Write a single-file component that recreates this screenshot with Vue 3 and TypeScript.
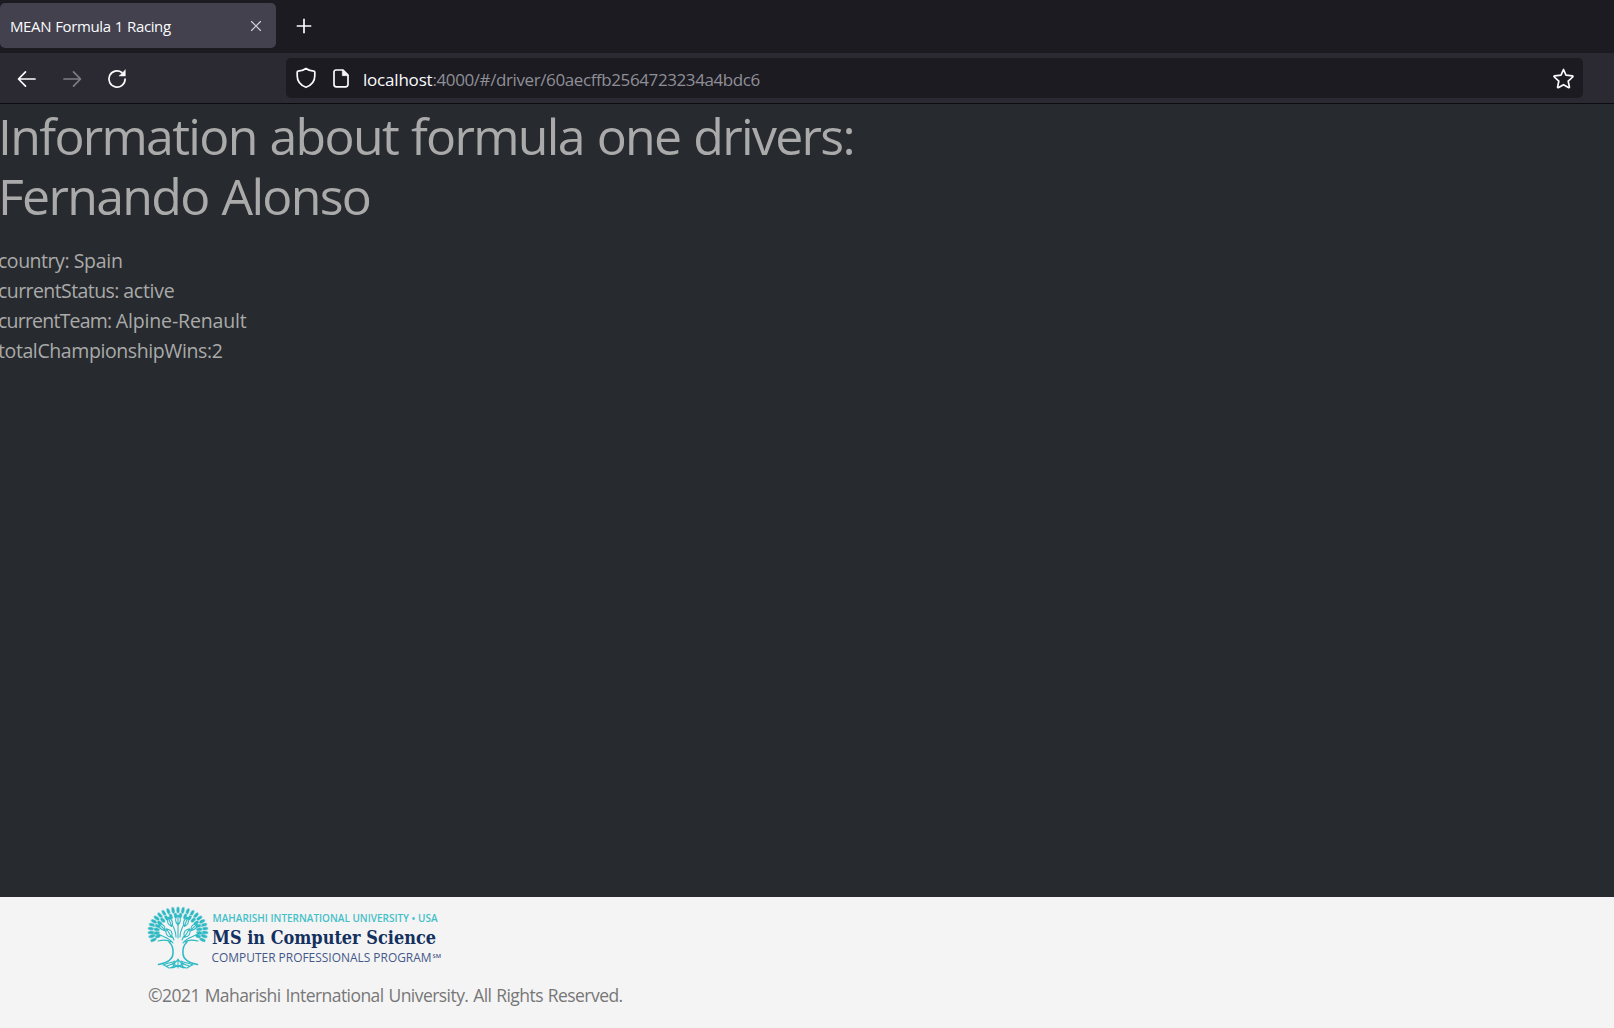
<script setup lang="ts">
interface Leaf {
  x: number
  y: number
  angle: number
  length: number
  width: number
}

const driver = {
  name: 'Fernando Alonso',
  details: [
    { label: 'country: ', value: 'Spain', tracking: [-0.47, -0.25] },
    { label: 'currentStatus: ', value: 'active', tracking: [-0.58, -0.27] },
    { label: 'currentTeam: ', value: 'Alpine-Renault', tracking: [-0.78, -0.14] },
    { label: 'totalChampionshipWins:', value: '2', tracking: [-0.4, -0.4] },
  ],
}

// Leaves fan out from the crown centre in rings.
function ring(count: number, rx: number, ry: number, from: number, to: number, length: number, width: number): Leaf[] {
  return Array.from({ length: count }, (_, i) => {
    const deg = from + ((to - from) * i) / (count - 1)
    const rad = (deg * Math.PI) / 180
    return { x: 31 + rx * Math.cos(rad), y: 25 + ry * Math.sin(rad), angle: deg, length, width }
  })
}

const leaves: Leaf[] = [
  ...ring(23, 27, 21, -205, 25, 3.6, 1.75),
  ...ring(18, 21.5, 15.5, -200, 20, 3.2, 1.8),
]
const innerLeaves: Leaf[] = [
  { x: 31, y: 14, angle: -90, length: 5, width: 2.4 },
  { x: 23, y: 16, angle: -110, length: 4.8, width: 2.3 },
  { x: 39, y: 16, angle: -70, length: 4.8, width: 2.3 },
  { x: 15, y: 21, angle: -135, length: 4.5, width: 2.2 },
  { x: 47, y: 21, angle: -45, length: 4.5, width: 2.2 },
  { x: 22, y: 27, angle: -120, length: 5, width: 2.8 },
  { x: 40, y: 27, angle: -60, length: 5, width: 2.8 },
]
</script>

<template>
  <div class="browser">
    <div class="tabs">
      <div class="tab">
        <span class="tab-title">MEAN Formula 1 Racing</span>
        <svg class="close" width="12" height="12" viewBox="0 0 12 12"><path d="M1.5 1.5l9 9M10.5 1.5l-9 9" /></svg>
      </div>
      <svg class="plus" width="16" height="16" viewBox="0 0 16 16"><path d="M8 .7v14.6M.7 8h14.6" /></svg>
    </div>

    <div class="toolbar">
      <div class="nav">
        <svg width="20" height="20" viewBox="0 0 20 20"><path d="M18 10H2M8.5 2.8L1.5 10l7 7.2" /></svg>
        <svg class="disabled" width="20" height="20" viewBox="0 0 20 20"><path d="M2 10h16M11.5 2.8l7 7.2-7 7.2" /></svg>
        <svg width="20" height="20" viewBox="0 0 20 20">
          <path d="M18.1 10A8.1 8.1 0 1 1 14.8 3.5" />
          <path class="solid" d="M18.3 1v6h-6z" />
        </svg>
      </div>
      <div class="address">
        <svg class="shield" width="20" height="22" viewBox="0 0 20 22">
          <path d="M10 1.5C8 3 4.8 4.1 2.1 4.2c-.6 0-.9.3-.9 1v3.6c0 5.7 3.9 9.7 8.8 11.5 4.9-1.8 8.8-5.8 8.8-11.5V5.2c0-.7-.3-1-.9-1C15.2 4.1 12 3 10 1.5z" />
        </svg>
        <svg class="page" width="16" height="19" viewBox="0 0 16 19">
          <path d="M3 1h7l5 5v9.5a2.3 2.3 0 0 1-2.3 2.3H3.3A2.3 2.3 0 0 1 1 15.5V3a2 2 0 0 1 2-2z" />
          <path class="solid" d="M9.3 1v5.7H15z" />
        </svg>
        <span class="url"><b>localhost</b>:4000/#/driver/60aecffb2564723234a4bdc6</span>
        <svg class="star" width="21" height="21" viewBox="0 0 21 21">
          <path d="M10.5 1.5l2.5 5.6 6.3.7c.7.1.9.7.4 1.2l-4.5 4.2 1.2 5.7c.1.7-.4 1-1 .7l-4.9-2.9-4.9 2.9c-.6.3-1.1 0-1-.7l1.2-5.7L1.3 9c-.5-.5-.3-1.1.4-1.2L8 7.1z" />
        </svg>
      </div>
    </div>

    <main>
      <h1>
        <span>Information about formula one drivers:</span>
        <span>{{ driver.name }}</span>
      </h1>
      <ul>
        <li v-for="d in driver.details" :key="d.label">
          <span :style="{ letterSpacing: d.tracking[0] + 'px' }">{{ d.label }}</span>
          <span :style="{ letterSpacing: d.tracking[1] + 'px' }">{{ d.value }}</span>
        </li>
      </ul>
    </main>

    <footer>
      <svg class="logo" width="300" height="64" viewBox="0 0 300 64">
        <g class="tree">
          <ellipse
            v-for="(l, i) in leaves" :key="'o' + i" class="leaf"
            :rx="l.length" :ry="l.width" :transform="`translate(${l.x} ${l.y}) rotate(${l.angle})`"
          />
          <path d="M26 37c-3-5-9-6-13-8s-6-1-8-1M27 34c-2-7-9-9-14-12M29 31c0-9-5-12-7-20M31 32V19M33 31c0-9 5-12 7-20M35 34c2-7 9-9 14-12M36 37c3-5 9-6 13-8s6-1 8-1M24 36c-4-3-9-2-13-1M38 36c4-3 9-2 13-1" />
          <g v-for="(l, i) in innerLeaves" :key="'i' + i" :transform="`translate(${l.x} ${l.y}) rotate(${l.angle})`">
            <path class="vein" :d="`M${-l.length} 0Q0 ${-l.width * 2} ${l.length} 0Q0 ${l.width * 2} ${-l.length} 0M${-l.length} 0H${l.length - 1}`" />
          </g>
          <path class="trunk" d="M22 36c3.5 3 4.5 7 4 12C25.5 54 20 57 11.5 58.5M40 36c-3.5 3-4.5 7-4 12 .5 6 6 9 14.5 10.5" />
          <path d="M31 53c-1 4-6 5-11 7M31 53c1 4 6 5 11 7M28 55c-3 2-8 2-12 4M34 55c3 2 8 2 12 4M31 54v8M28 57l-3 5M34 57l3 5M17 59l5 3M45 59l-5 3M23 62q8-5 16 0M25 58l12 4M37 58l-12 4" />
        </g>
        <text class="line1" x="65.5" y="16" textLength="225" lengthAdjust="spacingAndGlyphs">MAHARISHI INTERNATIONAL UNIVERSITY • USA</text>
        <text class="line2" x="65" y="37.5" textLength="224" lengthAdjust="spacingAndGlyphs">MS in Computer Science</text>
        <text class="line3" x="64.5" y="56" textLength="220" lengthAdjust="spacingAndGlyphs">COMPUTER PROFESSIONALS PROGRAM</text>
        <text class="mark" x="285.5" y="52" textLength="8.5" lengthAdjust="spacingAndGlyphs">SM</text>
      </svg>
      <p>©2021 Maharishi International University. All Rights Reserved.</p>
    </footer>
  </div>
</template>

<style>
body {
  margin: 0;
}
</style>

<style scoped>
.browser {
  width: 1614px;
  height: 1028px;
  display: flex;
  flex-direction: column;
  overflow: hidden;
  background: #272a2e;
  font-family: 'Open Sans', 'Noto Sans', sans-serif;
}
svg {
  display: block;
  flex: none;
  overflow: visible;
  fill: none;
  stroke: #fbfbfe;
  stroke-width: 1.7;
  stroke-linecap: round;
  stroke-linejoin: round;
}
.solid {
  fill: #fbfbfe;
  stroke-width: 0.5;
}
.tabs {
  box-sizing: border-box;
  height: 53px;
  flex: none;
  display: flex;
  align-items: flex-start;
  padding-top: 3px;
  background: #1c1b22;
}
.tab {
  box-sizing: border-box;
  width: 276px;
  height: 45px;
  display: flex;
  align-items: center;
  justify-content: space-between;
  padding: 0 14px 0 10px;
  border-radius: 5px;
  background: #42414d;
}
.tab-title {
  color: #fbfbfe;
  font-size: 15px;
  letter-spacing: -0.38px;
  word-spacing: 0.6px;
  white-space: nowrap;
}
.close {
  stroke: #d6d6dc;
  stroke-width: 1.1;
}
.plus {
  margin: 15px 0 0 20px;
  stroke-width: 1.7;
  stroke-linecap: butt;
}
.toolbar {
  box-sizing: border-box;
  height: 51px;
  flex: none;
  display: flex;
  padding: 5px 31px 5px 17px;
  border-bottom: 1px solid #0c0b10;
  background: #2b2a33;
}
.nav {
  width: 269px;
  height: 41px;
  display: flex;
  align-items: center;
  gap: 25px;
}
.disabled {
  opacity: 0.4;
}
.address {
  flex: 1;
  height: 40px;
  display: flex;
  align-items: center;
  border-radius: 5px;
  background: #1c1b22;
}
.shield {
  margin-left: 10px;
}
.page {
  margin-left: 17px;
}
.url {
  flex: 1;
  margin-left: 14px;
  padding-top: 3px;
  color: #8f8f96;
  font-size: 17px;
  line-height: 37px;
  letter-spacing: -0.4px;
}
.url b {
  color: #fbfbfe;
  font-weight: 400;
  letter-spacing: -0.2px;
}
.star {
  margin-right: 9px;
}
main {
  flex: 1;
  color: #aaaaaa;
}
h1 {
  margin: 2px 0 0 -2px;
  font-size: 50px;
  line-height: 60px;
  font-weight: 400;
  letter-spacing: -1.69px;
  word-spacing: 1.6px;
}
h1 span {
  display: block;
  white-space: nowrap;
}
ul {
  margin: 20px 0 0 -2px;
  padding: 0;
  list-style: none;
  font-size: 19.5px;
  line-height: 30px;
}
li {
  display: flex;
  white-space: pre;
}
footer {
  box-sizing: border-box;
  height: 131px;
  flex: none;
  padding: 9px 147px 0;
  background: #f4f4f4;
}
.tree {
  stroke: #2cb9c4;
  stroke-width: 1.05;
}
.leaf {
  fill: #2cb9c4;
  stroke: #f4f4f4;
  stroke-width: 0.4;
}
.vein {
  fill: #f4f4f4;
}
.trunk {
  stroke-width: 1.5;
}
text {
  stroke: none;
}
.line1 {
  fill: #45bfc9;
  font-size: 10px;
  font-weight: 600;
}
.line2 {
  fill: #14305f;
  font-family: 'DejaVu Serif Condensed', 'DejaVu Serif', serif;
  font-size: 19px;
  font-weight: 700;
}
.line3 {
  fill: #445889;
  font-size: 12.5px;
}
.mark {
  fill: #445889;
  font-size: 5.5px;
  font-weight: 600;
}
footer p {
  margin: 10px 0 0 1px;
  color: #777;
  font-size: 17.5px;
  line-height: 30px;
  letter-spacing: -0.55px;
  word-spacing: 0.8px;
  white-space: nowrap;
}
</style>
